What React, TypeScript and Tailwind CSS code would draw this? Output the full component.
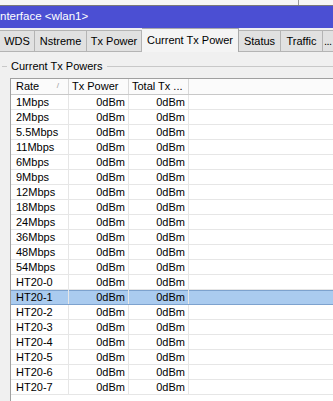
import React from "react";

const rates = [
  "1Mbps", "2Mbps", "5.5Mbps", "11Mbps", "6Mbps", "9Mbps", "12Mbps", "18Mbps",
  "24Mbps", "36Mbps", "48Mbps", "54Mbps", "HT20-0", "HT20-1", "HT20-2", "HT20-3",
  "HT20-4", "HT20-5", "HT20-6", "HT20-7",
];

const tabs = [
  { label: "WDS", w: "w-[35px]" },
  { label: "Nstreme", w: "w-[52px]" },
  { label: "Tx Power", w: "w-[55px]" },
  { label: "Current Tx Power", w: "w-[97px]", active: true },
  { label: "Status", w: "w-[42px]" },
  { label: "Traffic", w: "w-[42px]" },
];

export default function App() {
  return (
    <div
      className="w-[333px] h-[401px] overflow-hidden bg-[#f0f0f0] text-black"
      style={{ fontFamily: '"Liberation Sans", Arial, sans-serif' }}
    >
      {/* window top edge */}
      <div className="relative h-[6px] bg-[#f6f6f6] border-b border-[#7a7a7a]">
        <div className="absolute left-[298px] top-0 h-[5px] w-px bg-[#9a9a9a]" />
      </div>

      {/* Title bar */}
      <div className="flex h-[22px] items-center bg-[#4b4fd3] text-[11.5px] text-white">
        nterface &lt;wlan1&gt;
      </div>

      {/* Tabs */}
      <div className="flex h-[24px] items-end border-b border-[#b4b4b4]">
        {tabs.map((t) => (
          <div
            key={t.label}
            className={
              t.active
                ? `${t.w} -mb-px flex h-[24px] shrink-0 items-center justify-center border-r border-t border-[#a9a9a9] bg-[#f4f4f4] text-[11px]`
                : `${t.w} flex h-[21px] shrink-0 items-center justify-center border-r border-t border-[#b4b4b4] bg-[#e1e1e1] text-[11px]`
            }
          >
            {t.label}
          </div>
        ))}
        <div className="flex h-[21px] min-w-0 flex-1 items-center border-t border-[#b4b4b4] bg-[#e1e1e1] pl-[1px] text-[11px] tracking-[-0.5px]">
          ...
        </div>
      </div>

      {/* Group box label */}
      <div className="mt-[7px] flex h-[14px] items-center">
        <div className="ml-[2px] h-px w-[5px] bg-[#c8c8c8]" />
        <span className="px-[4px] text-[11px]">Current Tx Powers</span>
        <div className="h-px flex-1 bg-[#c8c8c8]" />
      </div>

      {/* Table */}
      <div className="ml-[10px] mt-[5px] h-[400px] border-l border-t border-[#a0a0a0] bg-white text-[11px]">
        <div className="flex h-[16px] border-b border-[#c8c8c8] bg-[#fbfbfb]">
          <div className="relative flex w-[58px] items-center border-r border-[#d8d8d8] pl-[5px]">
            Rate
            <span className="absolute right-[9px] top-[1px] text-[8px] text-[#9a9a9a]">/</span>
          </div>
          <div className="flex w-[60px] items-center border-r border-[#d8d8d8] pl-[3px]">Tx Power</div>
          <div className="flex w-[60px] items-center border-r border-[#d8d8d8] pl-[3px]">Total Tx ...</div>
          <div className="flex-1" />
        </div>

        {rates.map((r) => {
          const sel = r === "HT20-1";
          return (
            <div
              key={r}
              className={
                sel
                  ? "flex h-[15px] border-b border-[#7da2ce] bg-[#aacbef] shadow-[inset_0_1px_0_#7da2ce]"
                  : "flex h-[15px] border-b border-[#e6e6e6]"
              }
            >
              <div className="flex w-[58px] items-center border-r border-[#e6e6e6] pl-[5px]">{r}</div>
              <div className="flex w-[60px] items-center justify-end border-r border-[#e6e6e6] pr-[3px]">0dBm</div>
              <div className="flex w-[60px] items-center justify-end border-r border-[#e6e6e6] pr-[3px]">0dBm</div>
              <div className="flex-1" />
            </div>
          );
        })}
      </div>
    </div>
  );
}
